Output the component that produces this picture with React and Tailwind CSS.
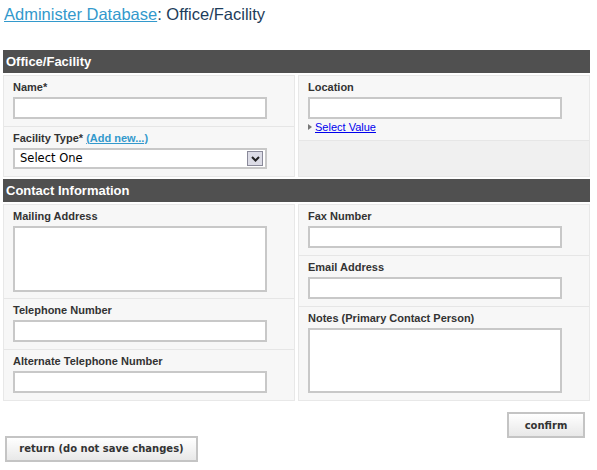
import React from "react";

const label = "block h-[14px] leading-[14px] text-[11px] font-bold text-[#333] font-['Liberation_Sans',Arial,sans-serif]";
const box = "block w-[254px] border-2 border-[#c8c8c8] bg-white";

const Field = ({ title, children, last, pb = "pb-[7px]" }) => (
  <div className={`pl-[9px] pt-[4px] ${pb} ${last ? "" : "border-b border-[#e6e6e6]"}`}>
    <span className={label}>{title}</span>
    <div className="mt-[3px]">{children}</div>
  </div>
);

const Input = () => <div className={`${box} h-[22px]`} />;
const TextArea = ({ h }) => <div className={`${box} ${h}`} />;

const Bar = ({ children }) => (
  <div className="h-[23px] bg-[#505050] pl-[3px] flex items-center text-white font-bold text-[13px] font-['Liberation_Sans',Arial,sans-serif]">
    {children}
  </div>
);

const Column = ({ children, fill }) => (
  <div className={`border border-[#e8e8e8] ${fill ? "bg-[#f0f0f0]" : "bg-[#f7f7f7]"} flex flex-col`}>{children}</div>
);

const Button = ({ children, w }) => (
  <button className={`${w} h-[26px] border-2 border-[#c4c4c4] bg-gradient-to-b from-white to-[#e8e8e8] text-[10px] font-bold text-[#333] font-['DejaVu_Sans',Verdana,sans-serif]`}>
    {children}
  </button>
);

export default function App() {
  return (
    <div className="w-[597px] h-[470px] bg-white font-['Liberation_Sans',Arial,sans-serif]">
      {/* page title */}
      <div className="pl-[4px] pt-[4px] h-[50px] text-[16.5px] leading-[20px] text-[#1d3c5a]">
        <a className="text-[#3399cc] underline">Administer Database</a>: Office/Facility
      </div>

      <div className="ml-[3px] w-[587px]">
        <Bar>Office/Facility</Bar>
        <div className="grid grid-cols-[292px_292px] gap-[3px] mt-[2px]">
          <Column>
            <Field title="Name*">
              <Input />
            </Field>
            <Field
              last
              title={
                <>
                  Facility Type* <a className="text-[#3399cc] underline">(Add new...)</a>
                </>
              }
            >
              <div className={`${box} h-[21px] relative flex items-center pl-[5px] text-[11.5px] text-black font-['DejaVu_Sans',Verdana,sans-serif]`}>
                Select One
                <span className="absolute right-[2px] top-[1px] w-[16px] h-[15px] border border-[#8a8a9a] bg-[#dcdce6] flex items-center justify-center">
                  <svg width="9" height="6" viewBox="0 0 9 6">
                    <path d="M1 1 L4.5 4.5 L8 1" stroke="#222" strokeWidth="2" fill="none" />
                  </svg>
                </span>
              </div>
            </Field>
          </Column>
          <Column fill>
            <div className="bg-[#f7f7f7] border-b border-[#e6e6e6] pl-[9px] pt-[4px] pb-[6px]">
              <span className={label}>Location</span>
              <div className="mt-[3px]">
                <Input />
              </div>
              <div className="flex items-center mt-[1px] h-[14px] text-[11px]">
                <svg width="5" height="6" viewBox="0 0 5 6" className="mr-[2px]">
                  <path d="M0 0 L4 3 L0 6 Z" fill="#777" />
                </svg>
                <a className="text-[#0000ee] underline">Select Value</a>
              </div>
            </div>
          </Column>
        </div>

        <div className="mt-[2px]">
          <Bar>Contact Information</Bar>
        </div>
        <div className="grid grid-cols-[292px_292px] gap-[3px] mt-[2px]">
          <Column>
            <Field title="Mailing Address" pb="pb-[6px]">
              <TextArea h="h-[66px]" />
            </Field>
            <Field title="Telephone Number">
              <Input />
            </Field>
            <Field title="Alternate Telephone Number" last>
              <Input />
            </Field>
          </Column>
          <Column>
            <Field title="Fax Number">
              <Input />
            </Field>
            <Field title="Email Address">
              <Input />
            </Field>
            <Field title="Notes (Primary Contact Person)" last>
              <TextArea h="h-[65px]" />
            </Field>
          </Column>
        </div>
      </div>

      <div className="flex justify-end pr-[12px] mt-[11px]">
        <Button w="w-[78px]">confirm</Button>
      </div>
      <div className="pl-[5px] -mt-[3px]">
        <Button w="w-[193px]">return (do not save changes)</Button>
      </div>
    </div>
  );
}
